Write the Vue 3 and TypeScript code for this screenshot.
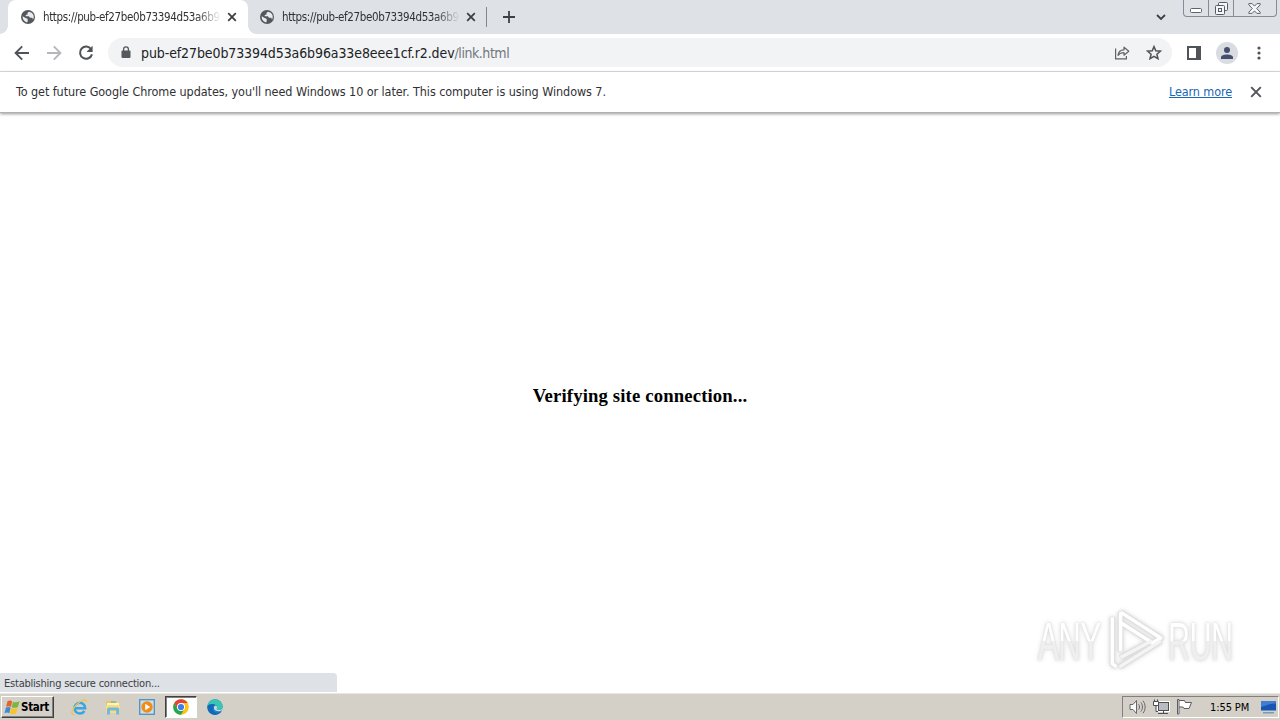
<script setup lang="ts">
interface Tab {
  title: string
  active: boolean
}

const tabs: Tab[] = [
  { title: 'https://pub-ef27be0b73394d53a6b9', active: true },
  { title: 'https://pub-ef27be0b73394d53a6b9', active: false },
]
</script>

<template>
  <div class="screen">
    <header class="tabstrip">
      <div v-for="(tab, i) in tabs" :key="i" class="tab" :class="{ active: tab.active }">
        <svg class="globe" width="14" height="14" viewBox="0 0 14 14">
          <circle cx="7" cy="7" r="7" fill="#54585d" />
          <path d="M1.7 6.2 5 8.2l1.1.2.7 1-.3 2.9C3.8 12.2 1.5 9.8 1.7 6.2ZM8 1.7 6.4 3.1l.2 1.3-2 .5.3 1.3h3l1.1 1.5 2.2.1.9 1.6c1.7-3.2.2-7-4.1-7.7Z" fill="#e9ebee" />
        </svg>
        <span class="title">{{ tab.title }}</span>
        <svg class="close" width="10" height="10" viewBox="0 0 10 10">
          <path d="m1.2 1.2 7.6 7.6M8.8 1.2 1.2 8.8" stroke="#3c4043" stroke-width="1.8" />
        </svg>
      </div>
      <span class="separator"></span>
      <svg class="plus" width="12" height="12" viewBox="0 0 12 12">
        <path d="M6 0v12M0 6h12" stroke="#3c4043" stroke-width="1.8" />
      </svg>
      <svg class="chevron" width="10" height="7" viewBox="0 0 10 7">
        <path d="m1 1 4 4 4-4" fill="none" stroke="#3c4043" stroke-width="1.8" />
      </svg>
      <div class="window-buttons">
        <span class="min">
          <svg width="13" height="6" viewBox="0 0 13 6"><rect x=".5" y=".5" width="11" height="4" rx="1" fill="#fff" stroke="#5e646d" /></svg>
        </span>
        <span class="restore">
          <svg width="13" height="13" viewBox="0 0 13 13" fill="#f5f6f8" stroke="#555b64">
            <rect x="3.5" y=".5" width="9" height="8" rx="1" />
            <rect x=".5" y="3.5" width="9" height="9" rx="1" />
            <rect x="3.5" y="6.5" width="3" height="3" />
          </svg>
        </span>
        <span class="quit">
          <svg width="13" height="11" viewBox="0 0 13 11"><path d="M.8.6h3.3l2.4 2.5L8.9.6h3.3v1.2L8.7 5.5l3.5 3.7v1.2H8.9L6.5 7.9l-2.4 2.5H.8V9.2l3.5-3.7L.8 1.8Z" fill="#f5f6f8" stroke="#5e646d" /></svg>
        </span>
      </div>
    </header>

    <nav class="toolbar">
      <svg class="back" width="16" height="16" viewBox="0 0 16 16" fill="none" stroke="#505357" stroke-width="1.9"><path d="M15 8H2M8.2 1.4 1.6 8l6.6 6.6" /></svg>
      <svg class="forward" width="16" height="16" viewBox="0 0 16 16" fill="none" stroke="#b5b7ba" stroke-width="1.9"><path d="M1 8h13M7.8 1.4 14.4 8l-6.6 6.6" /></svg>
      <svg class="reload" width="16" height="16" viewBox="0 0 16 16"><path d="M13.2 4.2A6.1 6.1 0 1 0 14 9.4" fill="none" stroke="#505357" stroke-width="2" /><path d="M14.6.8v6.1H8.5Z" fill="#505357" /></svg>
      <div class="address">
        <svg class="lock" width="10" height="13" viewBox="0 0 10 13"><rect x=".5" y="4.5" width="9" height="7.5" rx="1" fill="#55585c" /><path d="M2.6 5V3.2a2.4 2.4 0 0 1 4.8 0V5" fill="none" stroke="#55585c" stroke-width="1.3" /></svg>
        <span class="url"><span class="host">pub-ef27be0b73394d53a6b96a33e8eee1cf.r2.dev</span><span class="path">/link.html</span></span>
        <svg class="share" width="16" height="15" viewBox="0 0 16 15" fill="none" stroke="#5f6368" stroke-width="1.2"><path d="M1.6 3.5v10.3h10.8v-2.7" /><path d="M4 10.4c.4-3.6 2.4-5.5 6-5.6V2.2l4.8 4-4.8 4V7.7c-2.8 0-4.5.8-6 2.7Z" stroke-linejoin="round" /></svg>
        <svg class="star" width="16" height="15" viewBox="0 0 16 15"><path d="m8 1.6 1.8 4.2 4.6.4-3.5 3 1.1 4.5L8 11.3l-4 2.4 1.1-4.5-3.5-3 4.6-.4Z" fill="none" stroke="#505357" stroke-width="1.5" /></svg>
      </div>
      <svg class="panel" width="14" height="14" viewBox="0 0 14 14"><path d="M1 1h12v12H1Z" fill="none" stroke="#505357" stroke-width="2" /><path d="M9 1h4v12H9Z" fill="#505357" /></svg>
      <span class="avatar">
        <svg width="12" height="12" viewBox="0 0 12 12" fill="#46506a"><circle cx="6" cy="3" r="3" /><path d="M0 12v-1.7C0 8.2 3.5 7.4 6 7.4s6 .8 6 2.9V12Z" /></svg>
      </span>
      <svg class="menu" width="4" height="14" viewBox="0 0 4 14" fill="#505357"><circle cx="2" cy="2" r="1.6" /><circle cx="2" cy="7" r="1.6" /><circle cx="2" cy="12" r="1.6" /></svg>
    </nav>

    <section class="infobar">
      <span class="notice">To get future Google Chrome updates, you'll need Windows 10 or later. This computer is using Windows 7.</span>
      <a class="learn">Learn more</a>
      <svg width="12" height="12" viewBox="0 0 12 12"><path d="m1.2 1.2 9.6 9.6M10.8 1.2l-9.6 9.6" stroke="#505357" stroke-width="1.9" /></svg>
    </section>

    <main class="page">
      <h3>Verifying site connection...</h3>
      <div class="status">Establishing secure connection...</div>
      <div class="watermark">
        <span class="word any">ANY</span>
        <svg width="60" height="66" viewBox="0 0 58 64" fill="none" stroke-linejoin="round">
          <g stroke="#dedede" stroke-width="5">
            <path d="M7 9v45l4 3" /><path d="M15 4v38M15 4l39 25-8 5-31-20" /><path d="m14 57 40-25M15 48l30-16" />
          </g>
          <g stroke="#fff" stroke-width="3.4">
            <path d="M7 9v45l4 3" /><path d="M15 4v38M15 4l39 25-8 5-31-20" />
          </g>
          <path d="m14 57 40-25M15 48l30-16" stroke="#f4f4f4" stroke-width="3.2" />
        </svg>
        <span class="word run">RUN</span>
      </div>
    </main>

    <footer class="taskbar">
      <div class="start">
        <svg width="17" height="15" viewBox="0 0 17 15">
          <path d="M3.5 1.3C5.2.2 6.8.4 8.2 1.3L6.9 6.9C5.4 5.9 3.8 5.9 2.1 6.8Z" fill="#e8602c" />
          <path d="M9 1.7c1.6.9 3.7.9 6.6-.4l-1.7 5.6c-2.1 1-4.3 1.2-6.3.3Z" fill="#79b83f" />
          <path d="M1.9 7.7c1.7-.9 3.3-.9 4.7 0l-1.3 5.5c-1.5-.9-3-.9-4.8 0Z" fill="#3c8ad0" />
          <path d="M7.3 8.1c1.9.9 3.9.8 6.4-.2l-1.6 5.5c-2.1 1-4.1 1.1-6.1.2Z" fill="#f5c62c" />
        </svg>
        <span>Start</span>
      </div>
      <div class="launch">
        <span class="cell">
          <svg width="17" height="17" viewBox="0 0 17 17"><path d="M3.6 9.2h10.6A5.4 5.4 0 1 0 13.4 12" fill="none" stroke="#35a5e5" stroke-width="2.5" /><path d="M3.4 15.4C-1.2 16.4 1 9.8 6 5.2c4.5-4.1 9.5-5.8 9.6-2.3" fill="none" stroke="#efc34f" stroke-width="1.3" /></svg>
        </span>
        <span class="cell">
          <svg width="16" height="16" viewBox="0 0 16 16"><path d="M1 2h5l1 1.5h7V14H1Z" fill="#e9c765" /><path d="M2 4h12v4H2Z" fill="#fff4bd" /><path d="M1 6h14v8H1Z" fill="#f5dc83" /><path d="M2 15.5v-5C2 9.4 3 8.5 4 8.5h8.5c1 0 1.7.9 1.7 2v5h-3V11.5H5v4Z" fill="#72b9dc" /><path d="M6 3h5" stroke="#63a968" /></svg>
        </span>
        <span class="cell">
          <svg width="16" height="16" viewBox="0 0 16 16"><rect x=".7" y=".7" width="14.6" height="14.6" fill="#c7e0ed" stroke="#4f92c1" stroke-width="1.3" /><circle cx="8" cy="8" r="5.7" fill="#f58a16" /><path d="m6.2 4.7 5 3.3-5 3.3Z" fill="#fff" /></svg>
        </span>
        <span class="cell pressed">
          <svg width="16" height="16" viewBox="0 0 16 16"><circle cx="8" cy="8" r="7.8" fill="#fbc417" /><path d="M1.25 4.1A7.8 7.8 0 0 1 14.75 4.1H8L4.6 10Z" fill="#e54335" /><path d="M1.25 4.1A7.8 7.8 0 0 0 8 15.8l3.4-5.9L8 11.5 4.6 10Z" fill="#25a650" /><circle cx="8" cy="8" r="4" fill="#fff" /><circle cx="8" cy="8" r="3.1" fill="#3d7de8" /></svg>
        </span>
        <span class="cell">
          <svg width="16" height="16" viewBox="0 0 16 16"><circle cx="8" cy="8" r="7.7" fill="#1783d3" /><path d="M.5 7C1.4-1.8 14.8-1.7 15.7 7c.2 3-2 4.3-4.3 4.2-1.5 0-2.3-.7-1.5-1.8 1-2-.8-4.2-3.6-4.1C3.5 5.2 1.3 6 .5 7Z" fill="#38c6b2" /><path d="M.4 7.2c1.8-2.6 6-3 8-.7-3 .3-3.5 4.3-1 6.2 2 1.6 4.5 1.4 7.2-.6-2.4 4.6-9 5-12.2 1.3C.8 11.7.3 9.3.4 7.2Z" fill="#1269b8" /><path d="M8.3 6.5c-2 1-1.6 4.3.8 5.3 2.4.9 4.7.1 6-.9.4-.8.5-1.3.5-2-1 2-3.2 2.4-4.7 2.1-1.2-.2-1.7-.8-1-1.7.7-1 .1-2.2-1.6-2.8Z" fill="#d4d7d4" /></svg>
        </span>
      </div>
      <div class="tray">
        <svg width="17" height="16" viewBox="0 0 17 16" fill="none" stroke="#65676b"><path d="M1 5.5h3l3.5-4v13l-3.5-4H1Z" fill="#fafafa" /><path d="M9.6 5.3c1.2 1.5 1.2 3.9 0 5.4M11.8 3.4c2.2 2.5 2.2 6.7 0 9.2M14 1.8c2.8 3.4 2.8 9 0 12.4" /></svg>
        <svg class="network" width="17" height="16" viewBox="0 0 17 16" stroke="#4d4f53"><rect x="5.5" y="3.5" width="10" height="8" fill="#b9bcc0" stroke="#fff" stroke-width="3" /><rect x="5.5" y="3.5" width="10" height="8" fill="#b9bcc0" /><path d="M5 14.5h10M10.5 12v2M.5 2.5h5v4h-5ZM1.5.5v2M4.5.5v2M3 6.5v6h2" fill="#fff" /></svg>
        <svg class="flag" width="17" height="16" viewBox="0 0 17 16" stroke="#5b5d61"><path d="M2.5 1.5h6l1 2h6l-2.5 6H8l-1-1.5H2.5Z" fill="#fff" /><path d="M1.5.5h1.5v14.5H1.5Z" fill="#fff" /></svg>
        <time>1:55 PM</time>
        <svg class="desktop" width="17" height="14" viewBox="0 0 17 14"><path d="M1 1h15v9.5H1Z" fill="#1756b4" /><path d="M1 1h15v2.5C9 3.5 7 5.5 1 7Z" fill="#427fd0" /><path d="M3 12h11v1.5H3Z" fill="#789abb" /></svg>
      </div>
    </footer>
  </div>
</template>

<style>
html,
body {
  margin: 0;
  overflow: hidden;
}
</style>

<style scoped>
.screen {
  width: 1280px;
  height: 720px;
  display: flex;
  flex-direction: column;
  overflow: hidden;
  background: #fff;
  color: #202124;
  font-family: 'DejaVu Sans Condensed', 'DejaVu Sans', sans-serif;
  font-stretch: condensed;
  white-space: nowrap;
}
svg {
  display: block;
  flex: none;
}
.tabstrip {
  height: 34px;
  flex: none;
  display: flex;
  box-sizing: border-box;
  padding-left: 8px;
  background: #dee1e6;
}
.tab {
  width: 240px;
  height: 34px;
  box-sizing: border-box;
  padding: 0 11px 0 13px;
  display: flex;
  align-items: center;
}
.tab:nth-child(2) {
  width: 238px;
  padding-left: 12px;
  padding-right: 10px;
}
.tab.active {
  background: #fff;
  border-radius: 8px 8px 0 0;
  position: relative;
}
.tab.active::before,
.tab.active::after {
  content: '';
  position: absolute;
  bottom: 0;
  width: 8px;
  height: 8px;
}
.tab.active::before {
  left: -8px;
  background: radial-gradient(circle at 0 0, #dee1e6 7.5px, #fff 8px);
}
.tab.active::after {
  right: -8px;
  background: radial-gradient(circle at 8px 0, #dee1e6 7.5px, #fff 8px);
}
.title {
  flex: 1;
  min-width: 0;
  margin-left: 8px;
  margin-right: 7px;
  font-size: 11.5px;
  line-height: 20px;
  letter-spacing: -0.37px;
  color: #303134;
  mask-image: linear-gradient(to right, #000 153px, transparent 178px);
}
.separator {
  width: 1px;
  height: 20px;
  margin-top: 7px;
  background: #83868b;
}
.plus {
  margin: 11px 0 0 16px;
}
.chevron {
  margin: 14px 17px 0 auto;
}
.window-buttons {
  display: flex;
  width: 94px;
  height: 17px;
  margin-right: 3px;
  box-sizing: border-box;
  border: 1px solid #868b95;
  border-top: 0;
  border-radius: 0 0 4px 4px;
}
.window-buttons span {
  display: flex;
  justify-content: center;
}
.min {
  width: 24px;
  padding-top: 8px;
}
.restore {
  width: 24px;
  padding-top: 2px;
  border: solid #868b95;
  border-width: 0 1px;
}
.quit {
  flex: 1;
  padding-top: 3px;
}
.window-buttons .quit svg {
  margin-right: 2px;
}
.toolbar {
  height: 37px;
  flex: none;
  display: flex;
  align-items: center;
  padding: 0 19px 0 14px;
  border-bottom: 1px solid #dadce0;
}
.forward {
  margin-left: 16px;
}
.reload {
  margin-left: 16px;
}
.address {
  flex: 1;
  height: 29px;
  margin-left: 14px;
  display: flex;
  align-items: center;
  border-radius: 15px;
  background: #f1f3f4;
}
.lock {
  margin-left: 13px;
}
.url {
  margin-left: 10px;
  font-size: 14px;
  line-height: 22px;
  letter-spacing: -0.1px;
}
.path {
  color: #73777c;
  letter-spacing: -0.45px;
}
.share {
  margin-left: auto;
}
.star {
  margin: 0 10px 0 16px;
}
.panel {
  margin-left: 15px;
}
.avatar {
  width: 22px;
  height: 22px;
  margin-left: 15px;
  display: grid;
  place-items: center;
  border-radius: 50%;
  background: #d9dce1;
}
.menu {
  margin-left: 19px;
}
.infobar {
  height: 40px;
  flex: none;
  display: flex;
  align-items: center;
  padding: 0 18px 0 16px;
  border-bottom: 1px solid #b1b1b1;
  box-shadow: 0 1px 3px #999;
  color: #303134;
  font-size: 12.5px;
  line-height: 20px;
  position: relative;
}
.notice {
  letter-spacing: -0.073px;
}
.learn {
  margin-left: auto;
  margin-right: 18px;
  letter-spacing: -0.1px;
  color: #1967b8;
  text-decoration: underline;
}
.page {
  flex: 1;
  display: grid;
  place-items: center;
  position: relative;
}
h3 {
  margin: 0 0 15px;
  color: #000;
  font: bold 18.72px/22px 'Liberation Serif', serif;
  letter-spacing: 0.14px;
}
.status {
  position: absolute;
  left: 0;
  bottom: 1px;
  width: 337px;
  height: 19px;
  box-sizing: border-box;
  padding: 1px 0 0 4px;
  border-radius: 0 4px 0 0;
  background: #dee1e6;
  color: #3c4043;
  font-size: 11px;
  line-height: 20px;
  letter-spacing: -0.22px;
}
.watermark {
  position: absolute;
  left: 1038px;
  top: 495px;
  display: flex;
  align-items: center;
  filter: drop-shadow(0 0 1px #ddd) drop-shadow(0 0 2px #ddd);
}
.word {
  width: 112px;
  height: 54px;
  font: 54px/54px 'Liberation Sans', sans-serif;
  letter-spacing: -1px;
  background: linear-gradient(#fff 50%, #efefef 50%);
  background-clip: text;
  -webkit-text-fill-color: transparent;
  transform-origin: left;
  transform: scaleX(0.58);
}
.word.any {
  margin-right: -45px;
}
.word.run {
  width: 118px;
  margin-left: 3px;
  margin-right: -50px;
  transform: scaleX(0.565);
}
.taskbar {
  height: 27px;
  flex: none;
  display: flex;
  align-items: center;
  box-sizing: border-box;
  border-top: 1px solid #e9e7e1;
  background: #d4d0c8;
  color: #000;
  font-size: 11px;
}
.start {
  width: 53px;
  height: 22px;
  margin-left: 1px;
  padding-left: 2px;
  box-sizing: border-box;
  display: flex;
  align-items: center;
  border: 1px solid;
  border-color: #fff #404040 #404040 #fff;
  box-shadow: inset -1px -1px #808080;
  font-weight: bold;
  font-size: 11.5px;
  letter-spacing: -0.3px;
}
.launch {
  display: flex;
  margin-left: 8px;
}
.cell {
  width: 34px;
  height: 22px;
  display: grid;
  place-items: center;
}
.cell.pressed {
  width: 32px;
  margin: 0 1px;
  box-sizing: border-box;
  border: 1px solid;
  border-color: #404040 #fff #fff #404040;
  box-shadow: inset 1px 1px #808080;
  background: #fff;
}
.tray {
  width: 157px;
  height: 22px;
  margin: 0 1px 0 auto;
  padding: 0 1px 0 6px;
  box-sizing: border-box;
  display: flex;
  align-items: center;
  border: 1px solid;
  border-color: #808080 #fff #fff #808080;
}
.network {
  margin-left: 7px;
}
.flag {
  margin-left: 6px;
}
time {
  margin-left: 17px;
  letter-spacing: -0.1px;
}
.desktop {
  margin-left: auto;
}
</style>
